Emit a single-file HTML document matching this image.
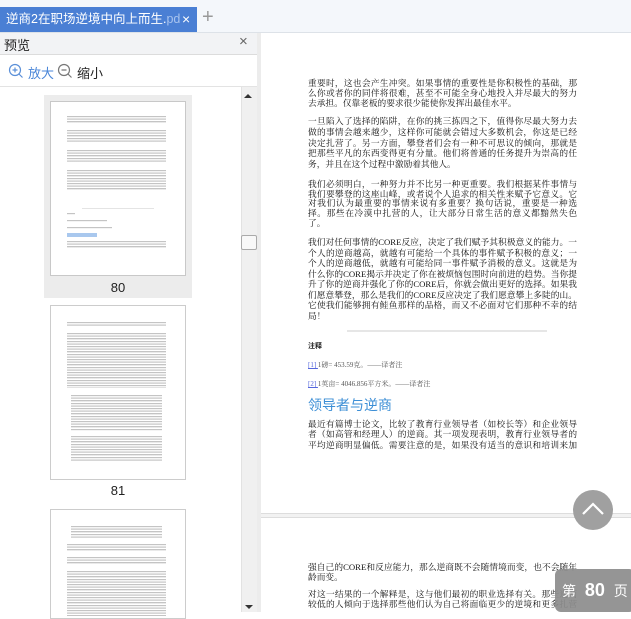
<!DOCTYPE html>
<html><head><meta charset="utf-8"><style>
*{margin:0;padding:0;box-sizing:border-box}
body{width:631px;height:612px;overflow:hidden;background:#fff;font-family:"Liberation Sans","Noto Sans CJK SC",sans-serif;position:relative}
.abs{position:absolute}
.tl{position:absolute;background:repeating-linear-gradient(to bottom,#b5b5b5 0,#b5b5b5 1px,#e4e4e4 1px,#e4e4e4 1.6px,transparent 1.6px,transparent 2.6px);opacity:.8}
.main p{position:absolute;left:308px;width:269px;font-family:"Liberation Serif","Noto Serif CJK SC",serif;font-size:8.7px;line-height:10.4px;color:#111;white-space:nowrap}
.main p span{display:block;text-align:justify;text-align-last:justify}
.main p span.e{text-align-last:left}
</style></head><body>
<!-- top bar -->
<div class="abs" style="left:0;top:0;width:631px;height:33px;background:#f4f7fb;border-bottom:1px solid #dde2e8"></div>
<div class="abs" style="left:0;top:7px;width:197px;height:25px;background:#4a7fd4;color:#fff;font-size:12.5px;line-height:25px;padding-left:6px;white-space:nowrap;overflow:hidden">逆商2在职场逆境中向上而生.<span style="color:#a8c3ee">pd</span></div>
<div class="abs" style="left:182px;top:7px;color:#fff;font-size:14px;line-height:25px">×</div>
<div class="abs" style="left:202px;top:5px;color:#999;font-size:20px;line-height:25px">+</div>
<!-- sidebar -->
<div class="abs" style="left:0;top:33px;width:257px;height:22px;background:#f2f3f5;border-bottom:1px solid #dcdcdc"></div>
<div class="abs" style="left:4px;top:35px;font-size:13px;color:#222">预览</div>
<div class="abs" style="left:239px;top:33px;font-size:15px;color:#666">×</div>
<div class="abs" style="left:0;top:86px;width:257px;height:1px;background:#e3e3e3"></div>
<svg class="abs" style="left:8px;top:63px" width="16" height="16" viewBox="0 0 16 16"><circle cx="7" cy="7" r="5.5" fill="none" stroke="#5a8fd8" stroke-width="1.2"/><path d="M4.5 7h5M7 4.5v5M11 11l3.5 3.5" stroke="#5a8fd8" stroke-width="1.2"/></svg>
<div class="abs" style="left:28px;top:63px;font-size:13px;color:#4a86d8">放大</div>
<svg class="abs" style="left:57px;top:63px" width="16" height="16" viewBox="0 0 16 16"><circle cx="7" cy="7" r="5.5" fill="none" stroke="#777" stroke-width="1.2"/><path d="M4.5 7h5M11 11l3.5 3.5" stroke="#777" stroke-width="1.2"/></svg>
<div class="abs" style="left:77px;top:63px;font-size:13px;color:#222">缩小</div>
<!-- thumbs -->
<div class="abs" style="left:44px;top:95px;width:148px;height:203px;background:#ececec"></div>
<div class="abs" style="left:50px;top:101px;width:136px;height:175px;background:#fff;border:1px solid #c8c8c8"></div>
<div class="tl" style="left:67px;top:116px;width:99px;height:8px"></div>
<div class="tl" style="left:67px;top:130px;width:99px;height:13px"></div>
<div class="tl" style="left:67px;top:150px;width:99px;height:13px"></div>
<div class="tl" style="left:67px;top:170px;width:99px;height:21px"></div>
<div class="abs" style="left:82px;top:208px;width:72px;height:1px;background:#e4e4e4"></div>
<div class="tl" style="left:67px;top:213px;width:8px;height:2px"></div>
<div class="tl" style="left:67px;top:220px;width:40px;height:2px"></div>
<div class="tl" style="left:67px;top:227px;width:45px;height:2px"></div>
<div class="abs" style="left:67px;top:233px;width:30px;height:4px;background:#a9c8ee"></div>
<div class="tl" style="left:67px;top:241px;width:99px;height:8px"></div>
<div class="abs" style="left:50px;top:280px;width:136px;text-align:center;font-size:13px;color:#222">80</div>
<div class="abs" style="left:50px;top:305px;width:136px;height:175px;background:#fff;border:1px solid #ccc"></div>
<div class="tl" style="left:67px;top:322px;width:99px;height:5px"></div>
<div class="tl" style="left:67px;top:333px;width:99px;height:55px"></div>
<div class="tl" style="left:71px;top:395px;width:91px;height:36px"></div>
<div class="tl" style="left:71px;top:436px;width:91px;height:26px"></div>
<div class="abs" style="left:50px;top:483px;width:136px;text-align:center;font-size:13px;color:#222">81</div>
<div class="abs" style="left:50px;top:509px;width:136px;height:110px;background:#fff;border:1px solid #ccc"></div>
<div class="tl" style="left:71px;top:526px;width:91px;height:13px"></div>
<div class="tl" style="left:67px;top:544px;width:99px;height:8px"></div>
<div class="tl" style="left:67px;top:557px;width:99px;height:8px"></div>
<div class="tl" style="left:67px;top:571px;width:99px;height:45px"></div>
<!-- scrollbar -->
<div class="abs" style="left:241px;top:87px;width:16px;height:525px;background:#f0f0f0;border-left:1px solid #e2e2e2"></div>
<div class="abs" style="left:244px;top:94px;width:0;height:0;border-left:4px solid transparent;border-right:4px solid transparent;border-bottom:4px solid #333"></div>
<div class="abs" style="left:241px;top:235px;width:16px;height:15px;background:#f8f8f8;border:1px solid #aaa;border-radius:2px"></div>
<div class="abs" style="left:245px;top:605px;width:0;height:0;border-left:4px solid transparent;border-right:4px solid transparent;border-top:4px solid #333"></div>
<!-- main -->
<div class="abs" style="left:257px;top:33px;width:4px;height:579px;background:#ececec"></div>
<div class="main">
<p style="top:78px;line-height:10px"><span>重要时，这也会产生冲突。如果事情的重要性是你积极性的基础，那</span><span>么你或者你的同伴将很难，甚至不可能全身心地投入并尽最大的努力</span><span class="e">去承担。仅靠老板的要求很少能使你发挥出最佳水平。</span></p>
<p style="top:116px;line-height:10.8px"><span>一旦陷入了选择的陷阱，在你的挑三拣四之下，值得你尽最大努力去</span><span>做的事情会越来越少，这样你可能就会错过大多数机会，你这是已经</span><span>决定扎营了。另一方面，攀登者们会有一种不可思议的倾向，那就是</span><span>把那些平凡的东西变得更有分量。他们将普通的任务提升为崇高的任</span><span class="e">务，并且在这个过程中激励着其他人。</span></p>
<p style="top:180px;line-height:9.7px"><span>我们必须明白，一种努力并不比另一种更重要。我们根据某件事情与</span><span>我们要攀登的这座山峰，或者说个人追求的相关性来赋予它意义。它</span><span>对我们认为最重要的事情来说有多重要？换句话说，重要是一种选</span><span>择。那些在冷漠中扎营的人，让大部分日常生活的意义都黯然失色</span><span class="e">了。</span></p>
<p style="top:237px;line-height:10.5px"><span>我们对任何事情的CORE反应，决定了我们赋予其积极意义的能力。一</span><span>个人的逆商越高，就越有可能给一个具体的事件赋予积极的意义；一</span><span>个人的逆商越低，就越有可能给同一事件赋予消极的意义。这就是为</span><span>什么你的CORE揭示并决定了你在被烦恼包围时向前进的趋势。当你提</span><span>升了你的逆商并强化了你的CORE后，你就会做出更好的选择。如果我</span><span>们愿意攀登，那么是我们的CORE反应决定了我们愿意攀上多陡的山。</span><span>它使我们能够拥有鲑鱼那样的品格，而又不必面对它们那种不幸的结</span><span class="e">局！</span></p>
<div class="abs" style="left:347px;top:330px;width:200px;height:2px;background:#e6e6e6"></div>
<div class="abs" style="left:308px;top:341px;font-size:7px;font-weight:bold;color:#222">注释</div>
<div class="abs" style="left:308px;top:360px;font-size:7px;color:#555;font-family:'Liberation Serif','Noto Serif CJK SC',serif"><span style="color:#5566dd;text-decoration:underline">[1]&nbsp;</span>1磅= 453.59克。——译者注</div>
<div class="abs" style="left:308px;top:379px;font-size:7px;color:#555;font-family:'Liberation Serif','Noto Serif CJK SC',serif"><span style="color:#5566dd;text-decoration:underline">[2]&nbsp;</span>1英亩= 4046.856平方米。——译者注</div>
<div class="abs" style="left:308px;top:395px;font-size:14px;color:#3d8fd6;font-family:'Liberation Sans','Noto Sans CJK SC',sans-serif">领导者与逆商</div>
<p style="top:419px"><span>最近有篇博士论文，比较了教育行业领导者（如校长等）和企业领导</span><span>者（如高管和经理人）的逆商。其一项发现表明，教育行业领导者的</span><span>平均逆商明显偏低。需要注意的是，如果没有适当的意识和培训来加</span></p>
<div class="abs" style="left:261px;top:513px;width:370px;height:5px;background:#f2f2f2;border-top:1px solid #ddd;border-bottom:1px solid #ddd"></div>
<p style="top:562px"><span>强自己的CORE和反应能力，那么逆商既不会随情境而变，也不会随年</span><span class="e">龄而变。</span></p>
<p style="top:589px"><span>对这一结果的一个解释是，这与他们最初的职业选择有关。那些逆商</span><span>较低的人倾向于选择那些他们认为自己将面临更少的逆境和更多扎营</span></p>
</div>
<div class="abs" style="left:573px;top:490px;width:40px;height:40px;border-radius:50%;background:#a0a0a0"></div>
<svg class="abs" style="left:581px;top:500px" width="24" height="20"><path d="M2 14 L12 4 L22 14" fill="none" stroke="#fff" stroke-width="2.2"/></svg>
<div class="abs" style="left:555px;top:569px;width:80px;height:43px;border-radius:6px;background:rgba(140,140,140,.92);color:#fff;font-size:14px;line-height:43px;padding-left:7px;white-space:nowrap">第 <b style="font-size:18px;margin:0 5px">80</b> 页</div>
</body></html>
